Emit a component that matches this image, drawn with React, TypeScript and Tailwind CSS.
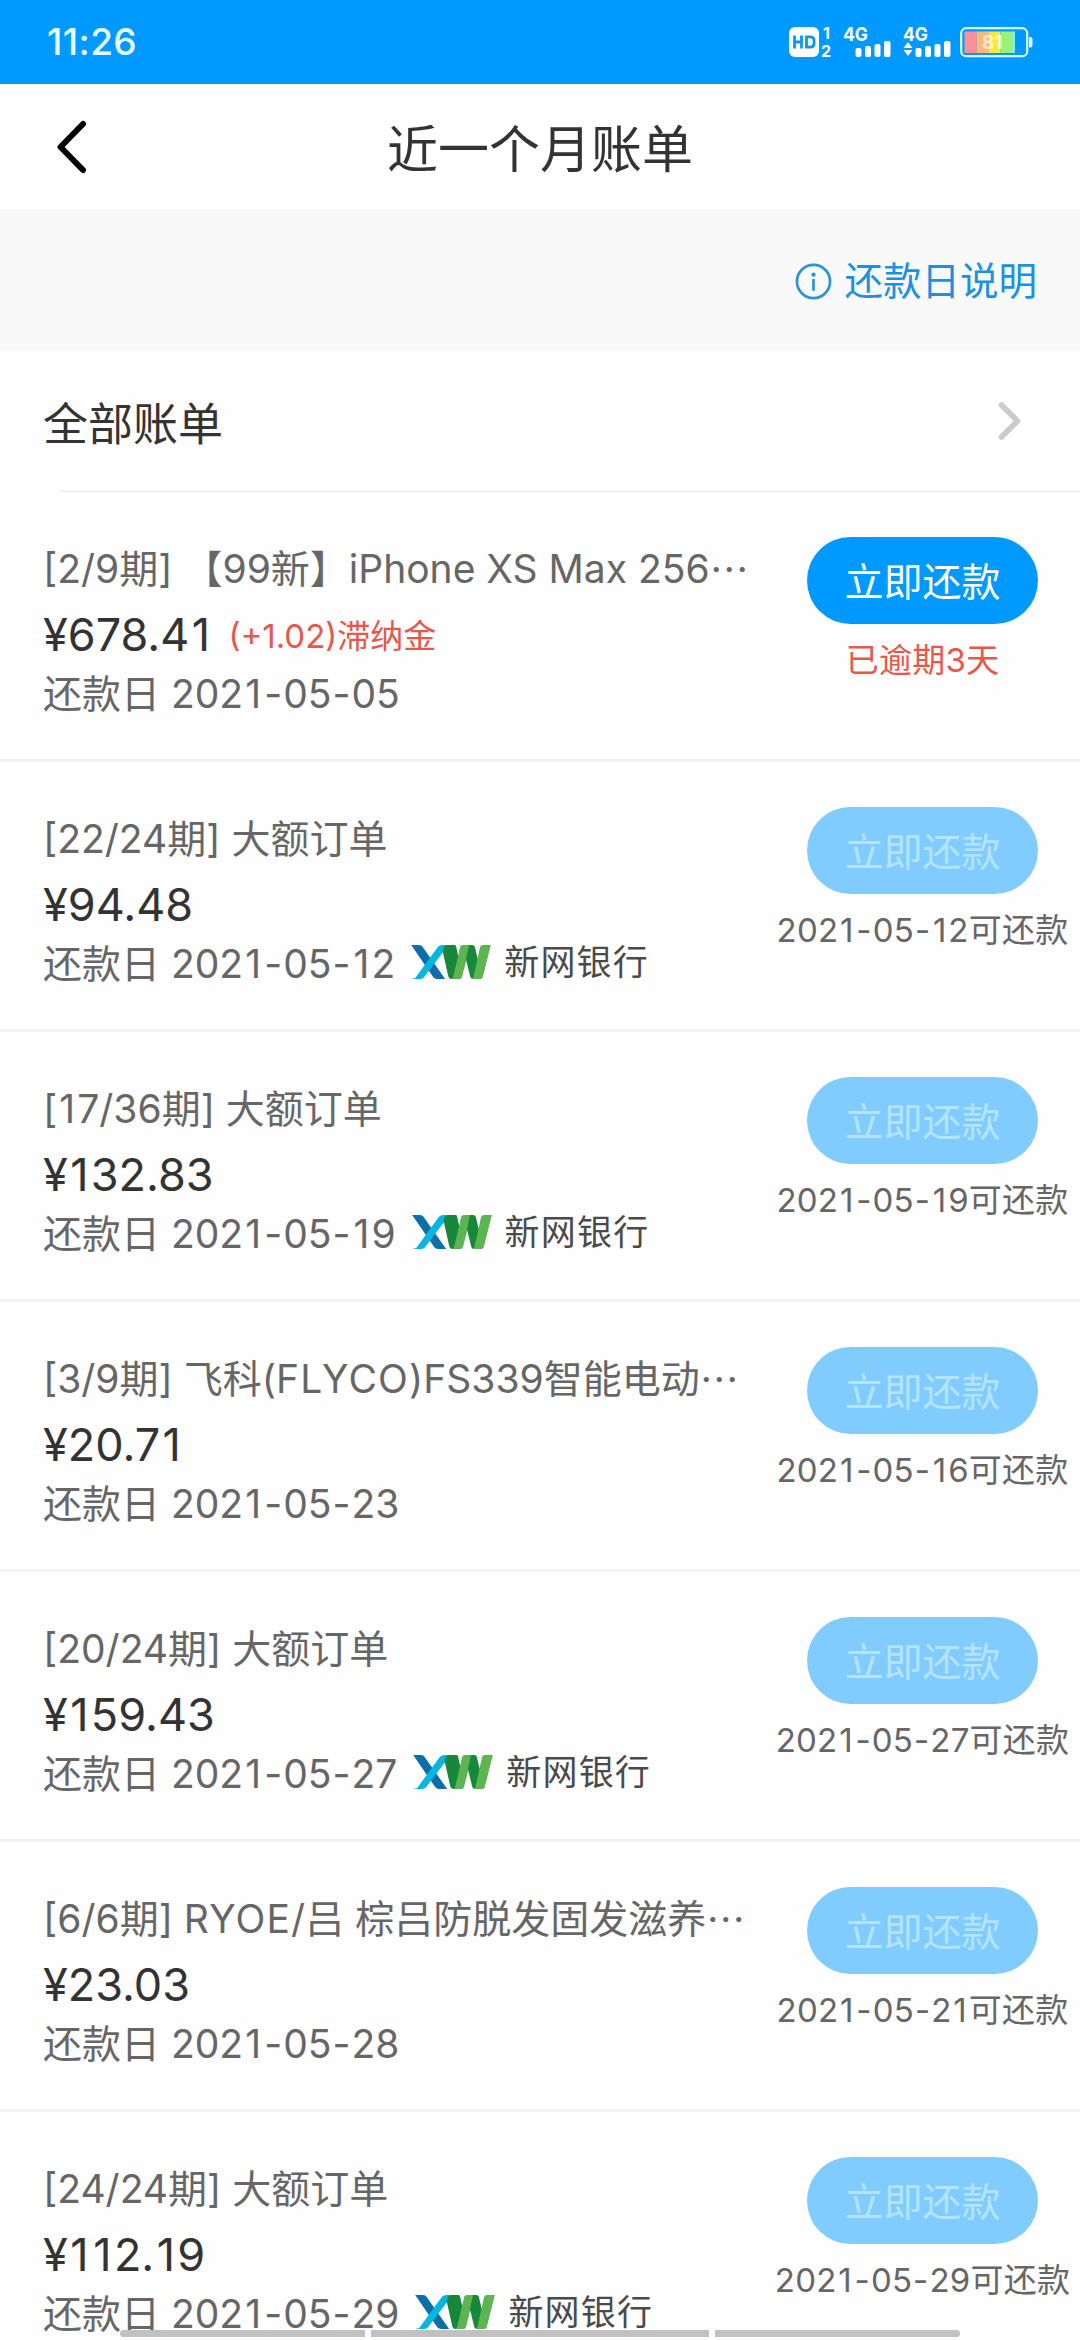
type Bill = {
  title: string;
  clipped?: boolean;
  amount: string;
  fee?: string;
  due: string;
  bank?: boolean;
  note: string;
  overdue?: boolean;
};

const bills: Bill[] = [
  { title: '[2/9期] 【99新】iPhone XS Max 256', clipped: true, amount: '¥678.41', fee: '(+1.02)滞纳金', due: '2021-05-05', note: '已逾期3天', overdue: true },
  { title: '[22/24期] 大额订单', amount: '¥94.48', due: '2021-05-12', bank: true, note: '2021-05-12可还款' },
  { title: '[17/36期] 大额订单', amount: '¥132.83', due: '2021-05-19', bank: true, note: '2021-05-19可还款' },
  { title: '[3/9期] 飞科(FLYCO)FS339智能电动', clipped: true, amount: '¥20.71', due: '2021-05-23', note: '2021-05-16可还款' },
  { title: '[20/24期] 大额订单', amount: '¥159.43', due: '2021-05-27', bank: true, note: '2021-05-27可还款' },
  { title: '[6/6期] RYOE/吕 棕吕防脱发固发滋养', clipped: true, amount: '¥23.03', due: '2021-05-28', note: '2021-05-21可还款' },
  { title: '[24/24期] 大额订单', amount: '¥112.19', due: '2021-05-29', bank: true, note: '2021-05-29可还款' },
];

/** Evens out the narrow "1" and "-" and opens up long capital runs. */
function Spaced({ text }: { text: string }) {
  return (
    <>
      {text.split(/(1|-|[A-Z]{4,})/).map((part, i) => {
        if (part === '1') return <span key={i} className="px-[0.053em]">{part}</span>;
        if (part === '-') return <span key={i} className="px-[0.026em]">{part}</span>;
        if (i % 2 === 1) return <span key={i} className="tracking-[0.03em]">{part}</span>;
        return part;
      })}
    </>
  );
}

function HdIcon() {
  return (
    <svg width="43" height="40" viewBox="0 -4 43 40" fill="none" className="overflow-visible">
      <rect x="0" y="1" width="30" height="30" rx="6" fill="#fff" />
      <path d="M5.500 9.500v13M12.500 9.500v13M5.500 16h7M17.500 10.800h3.500c3 0 4 1.200 4 3.200v4c0 2-1 3.200-4 3.200h-3.500z" stroke="#0a96f5" strokeWidth="2.800" />
      <text x="34" y="12.500" fontSize="16" fontWeight="700" fontFamily="Inter, sans-serif" fill="#fff">1</text>
      <text x="32" y="30.500" fontSize="16" fontWeight="700" fontFamily="Inter, sans-serif" fill="#fff">2</text>
    </svg>
  );
}

function SignalIcon({ arrows }: { arrows?: boolean }) {
  return (
    <svg width="48" height="40" viewBox="0 -4 48 40" fill="#fff" className="overflow-visible">
      <text x="0" y="15" fontSize="19" fontWeight="700" fontFamily="Inter, sans-serif" textLength="25" lengthAdjust="spacingAndGlyphs">4G</text>
      <rect x="12.500" y="22" width="6" height="9" rx="2" />
      <rect x="22" y="20" width="6" height="11" rx="2" />
      <rect x="31.500" y="18" width="6" height="13" rx="2" />
      <rect x="41" y="15" width="6.500" height="16" rx="2" />
      {arrows && <path d="M5 16l4.500 6h-9zM5 30l4.500-6h-9z" />}
    </svg>
  );
}

function BatteryIcon() {
  return (
    <svg width="73" height="32" viewBox="0 0 73 32" fill="none">
      <rect x="1.200" y="2.200" width="66" height="28" rx="5" stroke="#e0fcff" strokeWidth="2.200" />
      <path d="M69 11h1a2.500 2.500 0 0 1 2.500 2.500v5.500a2.500 2.500 0 0 1-2.500 2.500h-1z" fill="#e0fcff" />
      <rect x="4.500" y="5.500" width="12" height="21.500" fill="#ff8e96" />
      <rect x="16.500" y="5.500" width="12.500" height="21.500" fill="#fdb878" />
      <rect x="29" y="5.500" width="11.500" height="21.500" fill="#f6ea3c" />
      <rect x="40.500" y="5.500" width="11.500" height="21.500" fill="#9af274" />
      <rect x="52" y="5.500" width="3" height="21.500" fill="#8df0c8" />
      <text x="22" y="23" fontSize="19" fontWeight="700" fontFamily="Inter, sans-serif" fill="#fff" fillOpacity="0.700">81</text>
    </svg>
  );
}

function BankLogo() {
  return (
    <svg width="80" height="34" viewBox="0 0 78.500 33.500">
      <path d="M0 0h7.500c1.800 0 3 .7 4 2.100L33.500 33.500h-8c-1.800 0-3-.7-4-2.100z" fill="#0d6fa8" />
      <path d="M43 0H31c-2.500 0-4 .8-5.500 3L4 32.500 0 33.500h9c1.800 0 3-.7 4-2.100L33 5z" fill="#05b6e0" />
      <path d="M43 0h-6c-4 0-6.500 2.500-5.800 7l5.300 23.500c.5 2 1.500 3 3.500 3h5l3-15-3.500-16C44.200.8 43.800.2 43 0z" fill="#16873b" />
      <path d="M59 0h-8c-1.500 0-2.400.8-2.800 2.300L41.500 31c-.4 1.600-1.300 2.500-3 2.500h8.500c1.800 0 2.800-.8 3.200-2.500L57.500 3z" fill="#5cb551" />
      <path d="M57 0h3c1.500 0 2.400.8 2.800 2.300L69 28l-4.500 5.500h-3c-2 0-3-1-3.500-3L54 14z" fill="#16873b" />
      <path d="M78.500 0H71c-1.800 0-2.800.8-3.200 2.500L61.500 31c-.4 1.600-1.300 2.500-3 2.500h9c1.800 0 2.800-.8 3.200-2.500z" fill="#5cb551" />
    </svg>
  );
}

function BillRow({ bill }: { bill: Bill }) {
  return (
    <div className="flex h-[270px] shrink-0 border-b-[3px] border-[#f2f2f2]">
      <div className="flex min-w-0 flex-1 flex-col whitespace-nowrap pl-[43px] pt-[47px] text-[#666666]">
        <div className="flex h-[60px] text-[39px] leading-[60px]">
          <span>
            <Spaced text={bill.title} />
          </span>
          {bill.clipped && (
            <span lang="zh-CN" className="-mt-[2px] font-['Noto_Sans_CJK_SC',sans-serif]">⋯</span>
          )}
        </div>
        <div className="flex h-[68px] items-baseline pt-[2px] leading-[68px]">
          <span className="text-[45px] text-[#333333]">
            <Spaced text={bill.amount} />
          </span>
          {bill.fee && <span className="relative -top-[3px] ml-4 text-[33px] text-[#e9574b]">{bill.fee}</span>}
        </div>
        <div className="flex h-[54px] items-center text-[39px] leading-[54px]">
          <span>
            还款日 <Spaced text={bill.due} />
          </span>
          {bill.bank && (
            <span className="mb-1 ml-4 flex items-center gap-[13px]">
              <BankLogo />
              <span className="text-[35px] tracking-[1.2px] text-[#4a4a4a]">新网银行</span>
            </span>
          )}
        </div>
      </div>
      <div className="flex w-[315px] shrink-0 flex-col items-center pt-[45px]">
        <button
          className={
            bill.overdue
              ? 'h-[87px] w-[231px] rounded-full bg-[#0099ff] pt-[2px] text-[39px] leading-[85px] text-white'
              : 'h-[87px] w-[231px] rounded-full bg-[#80ccff] pt-[2px] text-[39px] leading-[85px] text-[#b5e4ff]'
          }
        >
          立即还款
        </button>
        <div
          className={
            bill.overdue
              ? 'mt-[11px] whitespace-nowrap text-[33px] leading-[50px] tracking-[0.25px] text-[#e9574b]'
              : 'mt-[11px] whitespace-nowrap text-[33px] leading-[50px] tracking-[0.25px] text-[#666666]'
          }
        >
          <Spaced text={bill.note} />
        </div>
      </div>
    </div>
  );
}

export default function App() {
  return (
    <div className="relative flex h-[2340px] w-[1080px] flex-col overflow-hidden bg-[#fefefe] font-['Inter','Noto_Sans_CJK_SC',sans-serif]">
      <div className="flex h-[84px] shrink-0 items-center justify-between bg-[#0099ff] pl-[47px] pr-[47px]">
        <span className="text-[37px] font-medium tracking-[0.4px] text-[#e9ffff]">11:26</span>
        <div className="flex items-center">
          <HdIcon />
          <div className="ml-[11px]"><SignalIcon /></div>
          <div className="ml-[12px]"><SignalIcon arrows /></div>
          <div className="ml-[9px]"><BatteryIcon /></div>
        </div>
      </div>

      <div className="grid h-[125px] shrink-0 grid-cols-[1fr_auto_1fr] items-center bg-white">
        <svg className="ml-[56px]" width="32" height="54" viewBox="0 0 32 54" fill="none">
          <path d="M27 4L4.500 27L27 50" stroke="#000" strokeWidth="6" strokeLinecap="round" strokeLinejoin="round" />
        </svg>
        <h1 className="pt-[6px] text-[51px] leading-[70px] text-[#333333]">近一个月账单</h1>
      </div>

      <div className="flex h-[142px] shrink-0 items-center justify-end gap-[12px] bg-[#f9f9f9] pr-[43px] pt-[2px] text-[38.5px] text-[#1a91e2]">
        <svg width="37" height="37" viewBox="0 0 38 38" fill="none">
          <circle cx="19" cy="19" r="17" stroke="#2d93d3" strokeWidth="2.800" />
          <circle cx="19" cy="12" r="2.200" fill="#2d93d3" />
          <path d="M19 16.500v12" stroke="#2d93d3" strokeWidth="2.800" />
        </svg>
        <span className="pt-[2px]">还款日说明</span>
      </div>

      <div className="flex h-[140px] shrink-0 items-center justify-between pl-[43px] pr-[58px]">
        <span className="pt-[7px] text-[45px] text-[#333333]">全部账单</span>
        <svg width="24" height="40" viewBox="0 0 24 40" fill="none">
          <path d="M3.500 4L19.500 20L3.500 36" stroke="#cbcbcb" strokeWidth="5.500" strokeLinecap="round" strokeLinejoin="round" />
        </svg>
      </div>
      <div className="ml-[60px] h-px shrink-0 bg-[#e8e8e8]" />

      {bills.map((bill) => (
        <BillRow key={bill.due} bill={bill} />
      ))}

      <div className="absolute bottom-[3px] left-[120px] flex h-[7px] w-[840px] overflow-hidden rounded-full bg-white">
        <div className="w-[245px] bg-[#c1c1c1]" />
        <div className="mx-[6px] flex-1 bg-[#c1c1c1]" />
        <div className="w-[245px] bg-[#c1c1c1]" />
      </div>
    </div>
  );
}
